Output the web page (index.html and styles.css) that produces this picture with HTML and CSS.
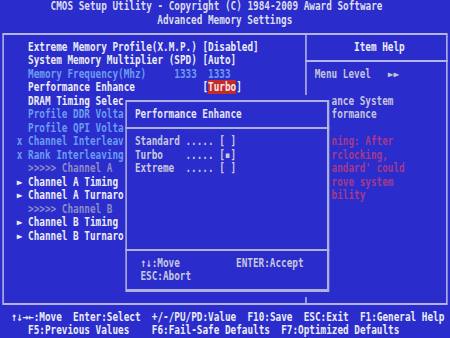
FILE: index.html
```html
<!DOCTYPE html>
<html lang="en">
<head>
    <meta charset="UTF-8">
    <title>CMOS Setup Utility - Advanced Memory Settings</title>
    <link rel="stylesheet" href="styles.css">
</head>
<body>
<div class="viewport">
<div class="screen">
    <div class="title title-top">CMOS Setup Utility - Copyright (C) 1984-2009 Award Software</div>
    <div class="title title-sub">Advanced Memory Settings</div>

    <!-- outer frame, help column divider and the rule under "Item Help" -->
    <div class="frame"></div>
    <div class="divider"></div>
    <div class="help-rule"></div>

    <div class="menu">
        <div class="item">  Extreme Memory Profile(X.M.P.) [Disabled]</div>
        <div class="item">  System Memory Multiplier (SPD) [Auto]</div>
        <div class="item locked">  Memory Frequency(Mhz)     1333  1333</div>
        <div class="item">  Performance Enhance            [<span class="selected">Turbo</span>]</div>
        <div class="item cut">  DRAM Timing Selec</div>
        <div class="item cut locked">  Profile DDR Volta</div>
        <div class="item cut locked">  Profile QPI Volta</div>
        <div class="item cut locked">x Channel Interleav</div>
        <div class="item cut locked">x Rank Interleaving</div>
        <div class="item cut group">  &gt;&gt;&gt;&gt;&gt; Channel A</div>
        <div class="item cut">► Channel A Timing</div>
        <div class="item cut">► Channel A Turnaro</div>
        <div class="item cut group">  &gt;&gt;&gt;&gt;&gt; Channel B</div>
        <div class="item cut">► Channel B Timing</div>
        <div class="item cut">► Channel B Turnaro</div>
    </div>

    <div class="help">
        <div class="line help-title">        Item Help</div>
        <div class="line"></div>
        <div class="line dim"> Menu Level   ►►</div>
        <div class="line"></div>
        <div class="line dim">    ance System</div>
        <div class="line dim">    formance</div>
        <div class="line"></div>
        <div class="line warn">    ning: After</div>
        <div class="line warn">    rclocking,</div>
        <div class="line warn">    andard' could</div>
        <div class="line warn">    rove system</div>
        <div class="line warn">    bility</div>
    </div>

    <div class="popup">
        <div class="popup-edge"></div>
        <div class="popup-title">Performance Enhance</div>
        <div class="popup-rule rule-top"></div>
        <div class="option opt-1">Standard ..... [ ]</div>
        <div class="option opt-2">Turbo    ..... [▪]</div>
        <div class="option opt-3">Extreme  ..... [ ]</div>
        <div class="popup-rule rule-bottom"></div>
        <div class="key key-move">↑↓:Move</div>
        <div class="key key-enter">ENTER:Accept</div>
        <div class="key key-esc">ESC:Abort</div>
    </div>

    <div class="footer footer-1">↑↓→←:Move  Enter:Select  +/-/PU/PD:Value  F10:Save  ESC:Exit  F1:General Help</div>
    <div class="footer footer-2">F5:Previous Values    F6:Fail-Safe Defaults  F7:Optimized Defaults</div>
</div>
</div>
</body>
</html>
```

FILE: styles.css
```css
html, body {
    margin: 0;
    background-color: #2a2ccc;
    overflow: hidden;
}
.viewport {
    width: 450px;
    height: 338px;
    overflow: hidden;
}
/* 80x25 text mode: every cell is 1ch wide and 13.52px high,
   then squeezed so 80 columns fill 450px */
.screen {
    display: grid;
    grid-template-columns: repeat(80, 1ch);
    grid-template-rows: repeat(25, 13.52px);
    width: 80ch;
    font-family: 'DejaVu Sans Mono', 'Liberation Mono', monospace;
    font-weight: bold;
    font-size: 12px;
    line-height: 13.52px;
    color: #ececf6;
    white-space: pre;
    transform: scaleX(0.7785);
    transform-origin: 0 0;
}
.title {
    color: #dcdcec;
}
.title-top {
    grid-row: 1;
    grid-column: 10 / span 59;
}
.title-sub {
    grid-row: 2;
    grid-column: 29 / span 24;
}
.frame {
    grid-row: 3 / 24;
    grid-column: 1 / 81;
    margin: 5.76px calc(0.5ch - 1px);
    border: 2px solid #b4b4e8;
}
.divider {
    grid-row: 3 / 24;
    grid-column: 55;
    justify-self: center;
    width: 2px;
    margin: 5.76px 0;
    background-color: #b4b4e8;
}
.help-rule {
    grid-row: 5;
    grid-column: 55 / 81;
    align-self: center;
    height: 2px;
    margin: 0 calc(0.5ch - 1px);
    background-color: #b4b4e8;
}
.menu {
    grid-row: 4 / 19;
    grid-column: 4 / 55;
    display: flex;
    flex-direction: column;
}
.item {
    height: 13.52px;
}
.locked {
    color: #6a9cf0;
}
.group {
    color: #8c8cc4;
}
.selected {
    background-color: #c42c2c;
    color: #f6e8e8;
}
.help {
    grid-row: 4 / 16;
    grid-column: 56 / 80;
    display: flex;
    flex-direction: column;
}
.help .line {
    height: 13.52px;
}
.help-title {
    color: #ececf6;
}
.dim {
    color: #c4c4dc;
}
.warn {
    color: #a23a8c;
}
.popup {
    grid-row: 8 / 23;
    grid-column: 23 / 60;
    display: grid;
    grid-template-columns: repeat(37, 1ch);
    grid-template-rows: repeat(15, 13.52px);
    background-color: #2a2ccc;
    color: #c8c8de;
    z-index: 2;
}
.popup-edge {
    grid-row: 1 / -1;
    grid-column: 1 / -1;
    margin: 5.76px calc(0.5ch - 1px);
    border: 2px solid #b0b0dc;
    border-right-width: 3px;
    border-bottom-width: 3px;
}
.popup-title {
    grid-row: 2;
    grid-column: 3 / 23;
    color: #e4e4f2;
}
.popup-rule {
    grid-column: 1 / -1;
    align-self: center;
    height: 2px;
    margin: 0 calc(0.5ch - 1px);
    background-color: #b0b0dc;
}
.rule-top {
    grid-row: 3;
}
.rule-bottom {
    grid-row: 12;
}
.option {
    grid-column: 3 / 21;
}
.opt-1 { grid-row: 4; }
.opt-2 { grid-row: 5; }
.opt-3 { grid-row: 6; }
.key-move {
    grid-row: 13;
    grid-column: 4 / 12;
}
.key-enter {
    grid-row: 13;
    grid-column: 21 / 33;
}
.key-esc {
    grid-row: 14;
    grid-column: 4 / 13;
}
.footer {
    color: #ececf6;
}
.footer-1 {
    grid-row: 24;
    grid-column: 3 / 81;
}
.footer-2 {
    grid-row: 25;
    grid-column: 6 / 81;
}
```
